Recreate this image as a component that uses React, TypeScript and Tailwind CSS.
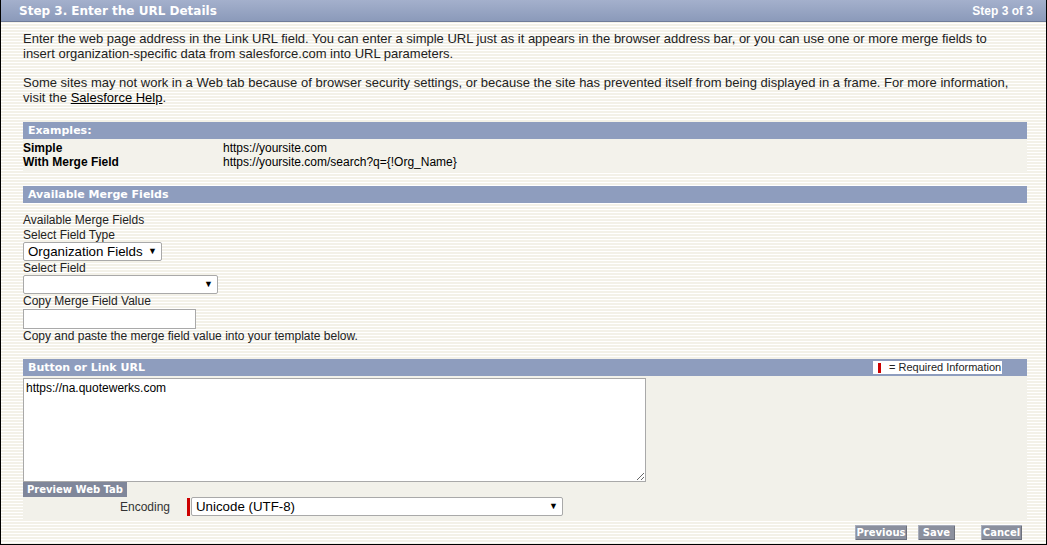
import React from "react";

const stripes =
  "bg-[repeating-linear-gradient(to_bottom,#f3f1e8_0px,#f3f1e8_2px,#ffffff_2px,#ffffff_3px)]";

function SectionBar({ title, children }: { title: string; children?: React.ReactNode }) {
  return (
    <div className="flex h-[17px] items-center justify-between bg-[#8e9dbe] pl-[5px] pr-[25px]">
      <span className="font-['DejaVu_Sans',sans-serif] text-[11px] font-bold leading-none text-white">
        {title}
      </span>
      {children}
    </div>
  );
}

function FakeSelect({ value, width }: { value: string; width: string }) {
  return (
    <div
      className={`flex h-[19px] items-center justify-between rounded-[2px] border border-[#a9a9a9] bg-white pl-[4px] pr-[4px] text-[13.3px] leading-none text-black ${width}`}
    >
      <span>{value}</span>
      <span className="text-[9px]">▼</span>
    </div>
  );
}

function GrayButton({ label, width }: { label: string; width: string }) {
  return (
    <button
      className={`h-[15px] bg-[#8b909e] font-['DejaVu_Sans',sans-serif] text-[10px] font-bold leading-none text-white shadow-[inset_1px_1px_0_#a9aebb,inset_-1px_-1px_0_#6d717d] ${width}`}
    >
      {label}
    </button>
  );
}

export default function App() {
  return (
    <div
      className={`h-[545px] w-[1047px] border-x border-b border-black font-['Liberation_Sans',Arial,sans-serif] text-[#222] ${stripes}`}
    >
      {/* Page header */}
      <div className="flex h-[22px] items-center justify-between border-b border-[#6f7c99] bg-[linear-gradient(to_bottom,#a4b0cc,#8b9aba)] pl-[18px] pr-[13px] font-bold text-white">
        <span className="font-['DejaVu_Sans',sans-serif] text-[12px]">Step 3. Enter the URL Details</span>
        <span className="text-[12px]">Step 3 of 3</span>
      </div>

      <div className="px-[22px]">
        {/* Intro */}
        <p className="mt-[9px] w-[980px] text-[13px] leading-[15px]">
          Enter the web page address in the Link URL field. You can enter a simple URL just as it appears in
          the browser address bar, or you can use one or more merge fields to insert organization-specific data
          from salesforce.com into URL parameters.
        </p>
        <p className="mt-[14px] text-[13px] leading-[15px]">
          Some sites may not work in a Web tab because of browser security settings, or because the site has
          prevented itself from being displayed in a frame. For more information, visit the{" "}
          <span className="text-black underline">Salesforce Help</span>.
        </p>

        {/* Examples */}
        <div className="mt-[17px] w-[1004px] bg-[#f3f2eb] pb-[3px]">
          <SectionBar title="Examples:" />
          <div className="grid grid-cols-[200px_1fr] pt-[2px] text-[12px] leading-[14px] text-black">
            <span className="font-bold">Simple</span>
            <span>https://yoursite.com</span>
            <span className="font-bold">With Merge Field</span>
            <span>https://yoursite.com/search?q={"{!Org_Name}"}</span>
          </div>
        </div>

        {/* Available Merge Fields */}
        <div className="mt-[14px] w-[1004px]">
          <SectionBar title="Available Merge Fields" />
          <div className="flex flex-col items-start pt-[10px] text-[12px] leading-[14px]">
            <span>Available Merge Fields</span>
            <span className="mt-[1px]">Select Field Type</span>
            <FakeSelect value="Organization Fields" width="w-[139px]" />
            <span>Select Field</span>
            <FakeSelect value="" width="w-[195px]" />
            <span>Copy Merge Field Value</span>
            <div className="mt-[1px] h-[20px] w-[173px] border border-[#a9a9a9] bg-white" />
            <span>Copy and paste the merge field value into your template below.</span>
          </div>
        </div>

        {/* Button or Link URL */}
        <div className="mt-[16px] w-[1004px] bg-[#f2f1ea] pb-[4px]">
          <SectionBar title="Button or Link URL">
            <div className="flex h-[13px] w-[129px] items-center whitespace-nowrap bg-white pl-[5px] text-[11px] leading-none text-[#222]">
              <span className="mr-[8px] h-[10px] w-[3px] shrink-0 bg-[#c00]" />
              <span>= Required Information</span>
            </div>
          </SectionBar>
          <textarea
            defaultValue="https://na.quotewerks.com"
            className="mt-[2px] block h-[104px] w-[623px] resize border border-[#a9a9a9] bg-white px-[2px] py-[2px] text-[12px] leading-[14px] text-black outline-none"
          />
          <div className="flex">
            <button className="h-[15px] w-[104px] bg-[#80879a] font-['DejaVu_Sans',sans-serif] text-[10px] font-bold leading-none text-white">
              Preview Web Tab
            </button>
          </div>
          <div className="flex items-center">
            <span className="w-[149px] pr-[2px] text-right text-[12px] text-[#333]">Encoding</span>
            <span className="ml-[15px] h-[18px] w-[3px] bg-[#c00]" />
            <div className="ml-[1px]">
              <FakeSelect value="Unicode (UTF-8)" width="w-[372px]" />
            </div>
          </div>
        </div>

        {/* Footer buttons */}
        <div className="mt-[5px] flex w-[999px] justify-end">
          <GrayButton label="Previous" width="w-[52px]" />
          <span className="w-[11px]" />
          <GrayButton label="Save" width="w-[37px]" />
          <span className="w-[26px]" />
          <GrayButton label="Cancel" width="w-[41px]" />
        </div>
      </div>
    </div>
  );
}
